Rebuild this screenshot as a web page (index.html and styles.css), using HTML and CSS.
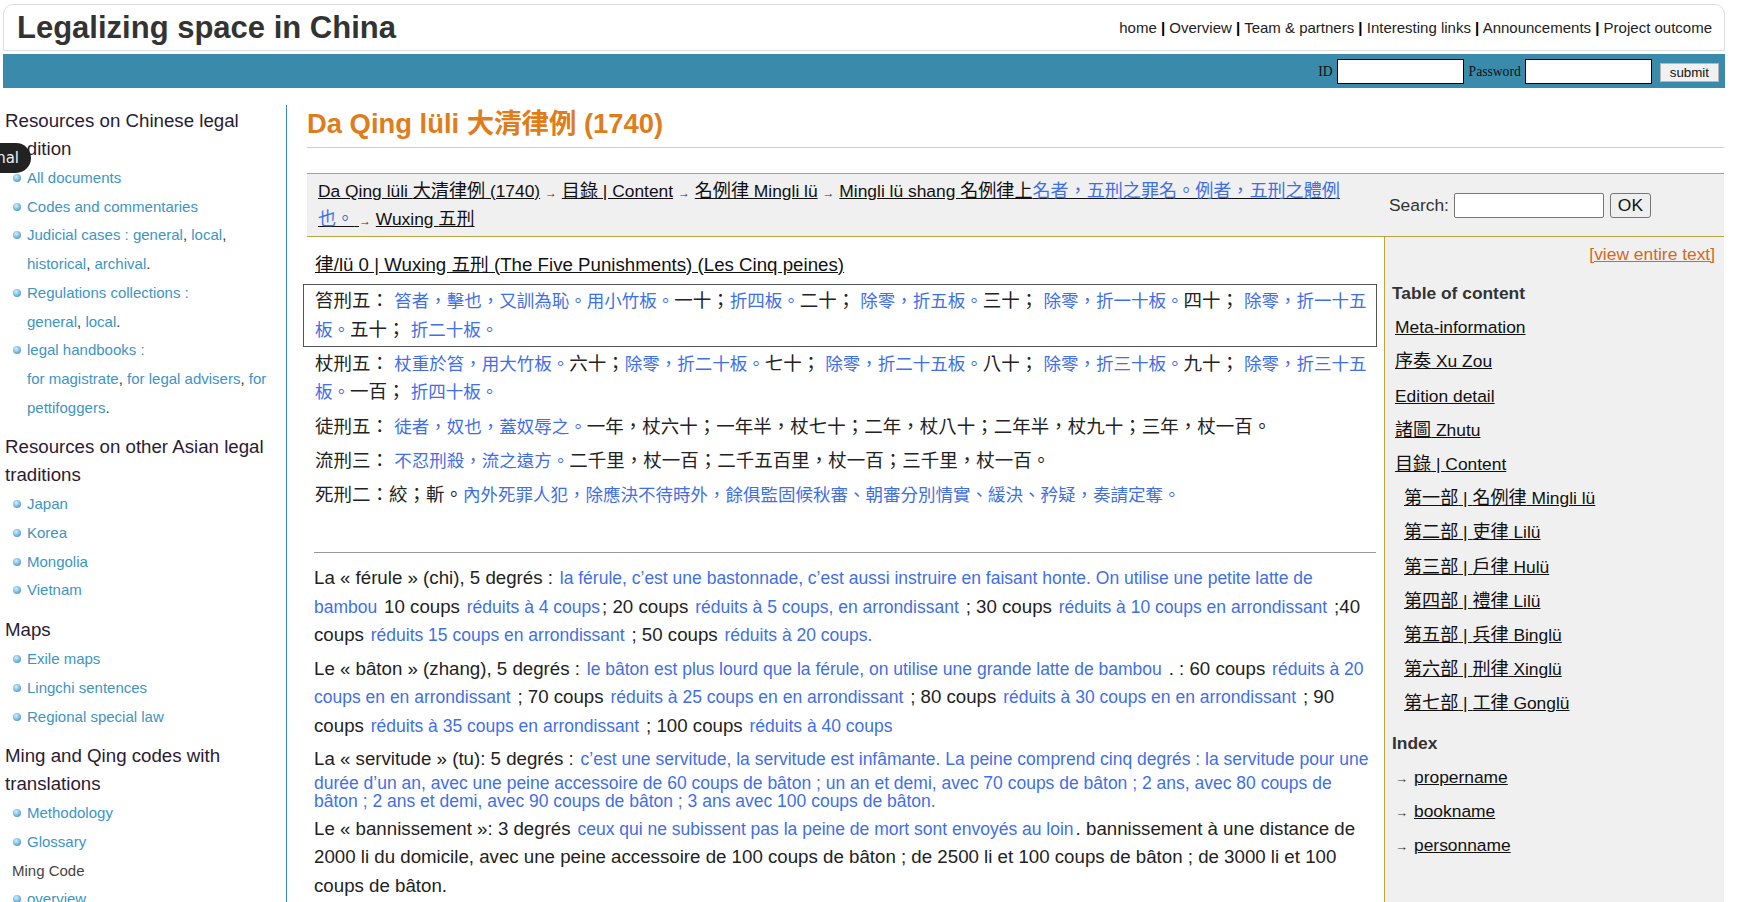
FILE: index.html
```html
<!DOCTYPE html>
<html lang="en">
<head>
<meta charset="utf-8">
<title>Da Qing lüli 大清律例 (1740)</title>
<link rel="stylesheet" href="styles.css">
</head>
<body>
<div class="lang-pill">nal</div>

<header class="masthead">
  <div class="site-title">Legalizing space in China</div>
  <nav class="topnav"><a href="#">home</a> <b>|</b> <a href="#">Overview</a> <b>|</b> <a href="#">Team &amp; partners</a> <b>|</b> <a href="#">Interesting links</a> <b>|</b> <a href="#">Announcements</a> <b>|</b> <a href="#">Project outcome</a></nav>
</header>

<div class="loginbar">
  <form class="login">
    <label>ID</label>
    <input class="field" type="text">
    <label>Password</label>
    <input class="field pw" type="password">
    <button class="submit" type="button">submit</button>
  </form>
</div>

<div class="layout">
  <aside class="side">
    <h3>Resources on Chinese legal tradition</h3>
    <ul>
      <li><a href="#">All documents</a></li>
      <li><a href="#">Codes and commentaries</a></li>
      <li><span class="lbl">Judicial cases :</span> <a href="#">general</a>, <a href="#">local</a>, <a href="#">historical</a>, <a href="#">archival</a>.</li>
      <li><span class="lbl">Regulations collections :</span><br><a href="#">general</a>, <a href="#">local</a>.</li>
      <li><span class="lbl">legal handbooks :</span><br><a href="#">for magistrate</a>, <a href="#">for legal advisers</a>, <a href="#">for pettifoggers</a>.</li>
    </ul>
    <h3>Resources on other Asian legal traditions</h3>
    <ul>
      <li><a href="#">Japan</a></li>
      <li><a href="#">Korea</a></li>
      <li><a href="#">Mongolia</a></li>
      <li><a href="#">Vietnam</a></li>
    </ul>
    <h3>Maps</h3>
    <ul>
      <li><a href="#">Exile maps</a></li>
      <li><a href="#">Lingchi sentences</a></li>
      <li><a href="#">Regional special law</a></li>
    </ul>
    <h3>Ming and Qing codes with translations</h3>
    <ul>
      <li><a href="#">Methodology</a></li>
      <li><a href="#">Glossary</a></li>
      <li class="plain">Ming Code</li>
      <li><a href="#">overview</a></li>
      <li><a href="#">Da Ming lü</a></li>
    </ul>
  </aside>

  <main class="main">
    <h1 class="doc-title">Da Qing lüli 大清律例 (1740)</h1>
    <div class="doc">
      <div class="crumbs"><a href="#">Da Qing lüli <span class="hz">大清律例</span> (1740)</a> <span class="arr">→</span> <a href="#"><span class="hz">目錄</span> | Content</a> <span class="arr">→</span> <a href="#"><span class="hz">名例律</span> Mingli lü</a> <span class="arr">→</span> <a href="#">Mingli lü shang <span class="hz">名例律上</span><span class="hz tr">名者，五刑之罪名。例者，五刑之體例也。</span> </a> <span class="arr">→</span> <a href="#">Wuxing <span class="hz">五刑</span></a></div>
      <form class="search"><label>Search:</label><input class="search-box" type="text"><button class="ok" type="button">OK</button></form>

      <div class="text">
        <div class="art-head"><a href="#">律/lü 0 | Wuxing 五刑 (The Five Punishments) (Les Cinq peines)</a></div>

        <div class="zh current">笞刑五： <span class="tr">笞者，擊也，又訓為恥。用小竹板。</span>一十；<span class="tr">折四板。</span>二十； <span class="tr">除零，折五板。</span>三十； <span class="tr">除零，折一十板。</span>四十； <span class="tr">除零，折一十五板。</span>五十； <span class="tr">折二十板。</span></div>
        <div class="zh">杖刑五： <span class="tr">杖重於笞，用大竹板。</span>六十；<span class="tr">除零，折二十板。</span>七十； <span class="tr">除零，折二十五板。</span>八十； <span class="tr">除零，折三十板。</span>九十； <span class="tr">除零，折三十五板。</span>一百； <span class="tr">折四十板。</span></div>
        <div class="zh">徒刑五： <span class="tr">徒者，奴也，蓋奴辱之。</span>一年，杖六十；一年半，杖七十；二年，杖八十；二年半，杖九十；三年，杖一百。</div>
        <div class="zh">流刑三： <span class="tr">不忍刑殺，流之遠方。</span>二千里，杖一百；二千五百里，杖一百；三千里，杖一百。</div>
        <div class="zh">死刑二：絞；斬。<span class="tr">內外死罪人犯，除應決不待時外，餘俱監固候秋審、朝審分別情實、緩決、矜疑，奏請定奪。</span></div>

        <div class="rule"></div>

        <p class="fr"><span class="o">La « férule » (chi), 5 degrés :</span> <span class="t">la férule, c’est une bastonnade, c’est aussi instruire en faisant honte. On utilise une petite latte de bambou</span> <span class="o">10 coups</span> <span class="t">réduits à 4 coups</span><span class="o">; 20 coups</span> <span class="t">réduits à 5 coups, en arrondissant</span> <span class="o">; 30 coups</span> <span class="t">réduits à 10 coups en arrondissant</span> <span class="o">;40 coups</span> <span class="t">réduits 15 coups en arrondissant</span> <span class="o">; 50 coups</span> <span class="t">réduits à 20 coups.</span></p>
        <p class="fr"><span class="o">Le « bâton » (zhang), 5 degrés :</span> <span class="t">le bâton est plus lourd que la férule, on utilise une grande latte de bambou</span> <span class="o">. : 60 coups</span> <span class="t">réduits à 20 coups en en arrondissant</span> <span class="o">; 70 coups</span> <span class="t">réduits à 25 coups en en arrondissant</span> <span class="o">; 80 coups</span> <span class="t">réduits à 30 coups en en arrondissant</span> <span class="o">; 90 coups</span> <span class="t">réduits à 35 coups en arrondissant</span> <span class="o">; 100 coups</span> <span class="t">réduits à 40 coups</span></p>
        <p class="fr"><span class="o">La « servitude » (tu): 5 degrés :</span> <span class="t">c’est une servitude, la servitude est infâmante. La peine comprend cinq degrés : la servitude pour une durée d’un an, avec une peine accessoire de 60 coups de bâton ; un an et demi, avec 70 coups de bâton ; 2 ans, avec 80 coups de bâton ; 2 ans et demi, avec 90 coups de bâton ; 3 ans avec 100 coups de bâton.</span></p>
        <p class="fr"><span class="o">Le « bannissement »: 3 degrés</span> <span class="t">ceux qui ne subissent pas la peine de mort sont envoyés au loin</span><span class="o">. bannissement à une distance de 2000 li du domicile, avec une peine accessoire de 100 coups de bâton ; de 2500 li et 100 coups de bâton ; de 3000 li et 100 coups de bâton.</span></p>
      </div>

      <div class="toc">
        <div class="view"><a href="#">[view entire text]</a></div>
        <h4>Table of content</h4>
        <div class="toc-item"><a href="#">Meta-information</a></div>
        <div class="toc-item"><a href="#"><span class="hz">序奏</span> Xu Zou</a></div>
        <div class="toc-item"><a href="#">Edition detail</a></div>
        <div class="toc-item"><a href="#"><span class="hz">諸圖</span> Zhutu</a></div>
        <div class="toc-item"><a href="#"><span class="hz">目錄</span> | Content</a></div>
        <div class="toc-item sub"><a href="#"><span class="hz">第一部</span> | <span class="hz">名例律</span> Mingli lü</a></div>
        <div class="toc-item sub"><a href="#"><span class="hz">第二部</span> | <span class="hz">吏律</span> Lilü</a></div>
        <div class="toc-item sub"><a href="#"><span class="hz">第三部</span> | <span class="hz">戶律</span> Hulü</a></div>
        <div class="toc-item sub"><a href="#"><span class="hz">第四部</span> | <span class="hz">禮律</span> Lilü</a></div>
        <div class="toc-item sub"><a href="#"><span class="hz">第五部</span> | <span class="hz">兵律</span> Binglü</a></div>
        <div class="toc-item sub"><a href="#"><span class="hz">第六部</span> | <span class="hz">刑律</span> Xinglü</a></div>
        <div class="toc-item sub"><a href="#"><span class="hz">第七部</span> | <span class="hz">工律</span> Gonglü</a></div>
        <h4>Index</h4>
        <div class="toc-item idx"><span class="arr">→</span><a href="#">propername</a></div>
        <div class="toc-item idx"><span class="arr">→</span><a href="#">bookname</a></div>
        <div class="toc-item idx"><span class="arr">→</span><a href="#">personname</a></div>
      </div>
    </div>
  </main>
</div>
</body>
</html>
```

FILE: styles.css
```css
* { box-sizing: border-box; }

html, body {
  margin: 0;
  padding: 0;
  background: #fff;
}

body {
  position: relative;
  font-family: "Liberation Sans", "Noto Sans CJK TC", sans-serif;
  color: #222;
  overflow-x: hidden;
}

.hz { font-size: 1.04em; }

/* floating language pill, partly off-screen */
.lang-pill {
  position: absolute;
  left: -45px;
  top: 143px;
  width: 76px;
  height: 30px;
  border-radius: 15px;
  background: #222;
  color: #eee;
  font-family: "DejaVu Sans", sans-serif;
  font-size: 15px;
  line-height: 30px;
  text-align: right;
  padding-right: 12px;
  z-index: 5;
}

/* header */
.masthead {
  margin: 4px 25px 0 3px;
  height: 47px;
  border: 1px solid #dedede;
  border-radius: 10px 10px 0 0;
  display: flex;
  justify-content: space-between;
  align-items: center;
  padding: 0 12px 0 13px;
  line-height: 45px;
}

.site-title {
  font-size: 31px;
  font-weight: bold;
  color: #333;
}

.topnav {
  font-size: 15px;
  color: #000;
}
.topnav a { color: #222; text-decoration: none; }
.topnav b { font-weight: bold; }

.loginbar {
  margin: 3px 25px 0 3px;
  height: 34px;
  background: #3a8bab;
  display: flex;
  justify-content: flex-end;
  align-items: center;
  padding-right: 6px;
}

.login {
  display: flex;
  align-items: center;
  font-family: "Liberation Serif", serif;
  font-size: 13.6px;
  color: #111;
  padding-top: 1px;
}
.login label { margin-right: 4px; }
.login .field {
  width: 127px;
  height: 25px;
  border: 1px solid #000;
  background: #fff;
  margin: 0 5px 0 0;
  padding: 0 3px;
}
.login .field.pw { margin-right: 8px; }
.login .submit {
  height: 19px;
  padding: 0 9px;
  margin-top: 2px;
  border: 1px solid #b5b5b5;
  background: #f1f1f1;
  font-family: "Liberation Sans", sans-serif;
  font-size: 13.33px;
  color: #111;
}

/* layout */
.layout {
  display: flex;
  align-items: stretch;
  margin-top: 17px;
}

.side {
  flex: none;
  width: 287px;
  border-right: 1px solid #3a8bab;
  padding: 2px 6px 0 5px;
}

.side h3 {
  margin: 0 0 1px;
  font-size: 18.7px;
  font-weight: normal;
  line-height: 28px;
  color: #2b1b33;
}

.side ul {
  list-style: none;
  margin: 0 0 11px;
  padding: 0;
}

.side li {
  font-size: 15px;
  line-height: 28.7px;
  padding-left: 22px;
  color: #333;
}

.side li::before {
  content: "";
  display: inline-block;
  width: 8px;
  height: 8px;
  border-radius: 50%;
  margin-left: -14px;
  margin-right: 6px;
  vertical-align: 1px;
  background: radial-gradient(circle at 40% 35%, #d6eefc 0%, #8cc6ea 40%, #4a98cc 80%, #3a84b8 100%);
}

.side li.plain { padding-left: 7px; color: #444; }
.side li.plain::before { display: none; }

.side a, .side .lbl { color: #3d95c3; text-decoration: none; }

/* main */
.main {
  flex: 1;
  min-width: 0;
  margin: 0 26px 0 20px;
  padding-top: 1px;
}

.doc-title {
  margin: 0;
  font-size: 27.4px;
  line-height: 36px;
  font-weight: bold;
  color: #e07d1b;
  padding-bottom: 5px;
  border-bottom: 1px solid #cfcfcf;
}

.doc {
  display: grid;
  grid-template-columns: 1fr 340px;
  margin-top: 25px;
  font-size: 17.4px;
}

.crumbs {
  background: #f0f0f0;
  border-top: 1px solid #c0a443;
  border-bottom: 1px solid #c0a443;
  padding: 3px 18px 3px 11px;
  line-height: 28px;
}
.crumbs a { color: #111; }
.tr { color: #3f6fe8; }
.arr { font-size: 12px; line-height: 1; color: #333; }

.search {
  background: #f0f0f0;
  border-top: 1px solid #c0a443;
  border-bottom: 1px solid #c0a443;
  display: flex;
  align-items: center;
  padding-left: 5px;
  margin: 0;
  color: #333;
}
.search label { margin-right: 5px; }
.search-box {
  width: 150px;
  height: 25px;
  border: 1px solid #767676;
  border-radius: 2px;
  background: #fff;
  margin: 0 6px 0 0;
}
.ok {
  width: 41px;
  height: 25px;
  border: 1px solid #767676;
  border-radius: 3px;
  background: #efefef;
  font-family: "Liberation Sans", sans-serif;
  font-size: 17.4px;
  color: #111;
  padding: 0;
}

.text {
  padding: 13.5px 9px 80px 0;
}

.art-head {
  padding-left: 8px;
  font-size: 18.7px;
  line-height: 28.5px;
  margin-bottom: 5px;
}
.art-head a { color: #111; }

.zh {
  font-size: 18.5px;
  line-height: 28.5px;
  padding: 2px 1px 1.8px 11px;
  border: 1px solid transparent;
  margin: 0 -2px 0 -4px;
  color: #222;
}
.zh .tr { font-size: 17.5px; line-height: 1; }
.zh.current { border-color: #555; }

.rule {
  margin: 40px -1px 11px 7px;
  border-top: 1px solid #9a9a9a;
}

.fr {
  margin: 5px 0;
  padding: 0 0 0 7px;
  line-height: 18px;
  color: #222;
}
.fr:last-child { margin-top: 3px; }
.fr .o { font-size: 18.7px; line-height: 28.5px; }
.fr .t { font-size: 17.5px; color: #3f6fe8; padding: 0 2px; }

/* table of content */
.toc {
  background: #f0f0f0;
  border-left: 1px solid #c0a443;
  padding: 0 9px 0 7px;
}
.view {
  text-align: right;
  line-height: 34px;
}
.view a { color: #d2691e; }

.toc h4 {
  margin: 5px 0 0;
  font-size: 17.4px;
  line-height: 34.2px;
  color: #333;
}

.toc-item {
  line-height: 34.2px;
  padding-left: 3px;
}
.toc-item a { color: #111; }
.toc-item.sub { padding-left: 12px; }
.toc-item.idx .arr { font-size: 13px; margin-right: 6px; }
```
